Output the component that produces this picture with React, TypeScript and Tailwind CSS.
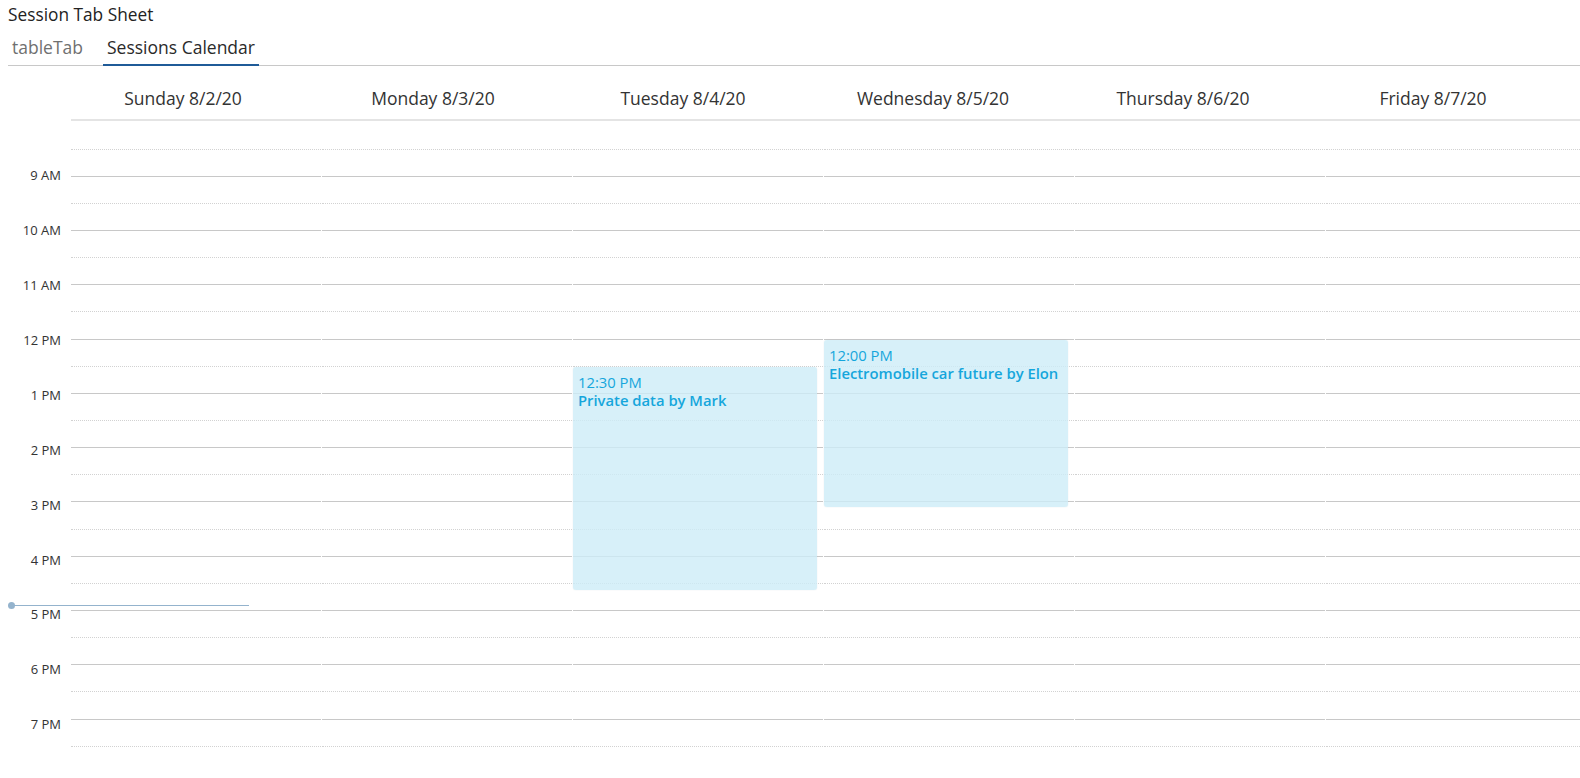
import React from 'react';

const HOURS = ['9 AM', '10 AM', '11 AM', '12 PM', '1 PM', '2 PM', '3 PM', '4 PM', '5 PM', '6 PM', '7 PM'];
const DAYS = ['Sunday 8/2/20', 'Monday 8/3/20', 'Tuesday 8/4/20', 'Wednesday 8/5/20', 'Thursday 8/6/20', 'Friday 8/7/20'];
const SLOTS = 24;

type Ev = { top: number; height: number; time: string; title: string };

const EVENTS: Record<number, Ev[]> = {
  2: [{ top: 246, height: 223, time: '12:30 PM', title: 'Private data by Mark' }],
  3: [{ top: 219, height: 167, time: '12:00 PM', title: 'Electromobile car future by Elon' }],
};

function Column({ idx }: { idx: number }) {
  const evs = EVENTS[idx] || [];
  return (
    <div className="relative flex flex-col pt-[1.5px]">
      {Array.from({ length: SLOTS }).map((_, i) => (
        <div
          key={i}
          className={
            i === SLOTS - 1
              ? 'h-[27.15px] shrink-0'
              : i % 2 === 0
              ? 'h-[27.15px] shrink-0 border-b border-dotted border-[#d2d2d2]'
              : 'h-[27.15px] shrink-0 border-b border-[#c8c8c8]'
          }
        />
      ))}
      {evs.map((e, k) => (
        <div
          key={k}
          className="absolute left-0 w-[244px] rounded-[3px] bg-[rgba(205,236,248,0.8)] shadow-[0_0_1px_rgba(120,160,180,0.35)] px-[5px] pt-[6px] text-[14.8px] leading-[18px] text-[#15a6dc]"
          style={{ top: e.top, height: e.height }}
        >
          <div>{e.time}</div>
          <div className="font-semibold">{e.title}</div>
        </div>
      ))}
    </div>
  );
}

export default function App() {
  return (
    <div
      className="h-[778px] w-[1580px] overflow-hidden bg-white flex flex-col text-[#333]"
      style={{ fontFamily: '"Open Sans", "Noto Sans", sans-serif' }}
    >
      <div className="pl-[8px] pt-[3px] h-[27px] text-[17.3px] leading-[24px] text-[#222]">Session Tab Sheet</div>
      <div className="ml-[8px] flex gap-[16px] border-b border-[#c8c8c8] h-[39px] text-[17.5px] leading-[24px]">
        <div className="px-[4px] pt-[8px] border-b-2 border-transparent text-[#707070]">tableTab</div>
        <div className="px-[4px] pt-[8px] border-b-2 border-[#1f5b98] text-[#2a2a2a] -mb-px h-[39px]">Sessions Calendar</div>
      </div>
      <div className="ml-[71px] border-b-2 border-[#e4e4e4] h-[55px]">
        <div className="-ml-[13px] flex">
          {DAYS.map((d) => (
            <div key={d} className="w-[250px] shrink-0 text-center pt-[20px] text-[17.5px] leading-[24px] text-[#333]">
              {d}
            </div>
          ))}
        </div>
      </div>
      <div className="relative flex-1 overflow-hidden flex">
        <div className="w-[71px] shrink-0 pt-[46.3px] pr-[10px] flex flex-col items-end text-[13px] leading-[16px] text-[#333]">
          {HOURS.map((h) => (
            <div key={h} className="h-[54.9px] shrink-0">
              {h}
            </div>
          ))}
        </div>
        <div className="flex-1 grid grid-cols-[repeat(5,250px)_1fr] gap-x-px">
          {DAYS.map((d, i) => (
            <Column key={d} idx={i} />
          ))}
        </div>
        <div className="absolute left-[11px] top-[484px] w-[238px] h-px bg-[#94b3cd]" />
        <div className="absolute left-[7.5px] top-[481px] w-[7px] h-[7px] rounded-full bg-[#94b3cd]" />
      </div>
    </div>
  );
}
